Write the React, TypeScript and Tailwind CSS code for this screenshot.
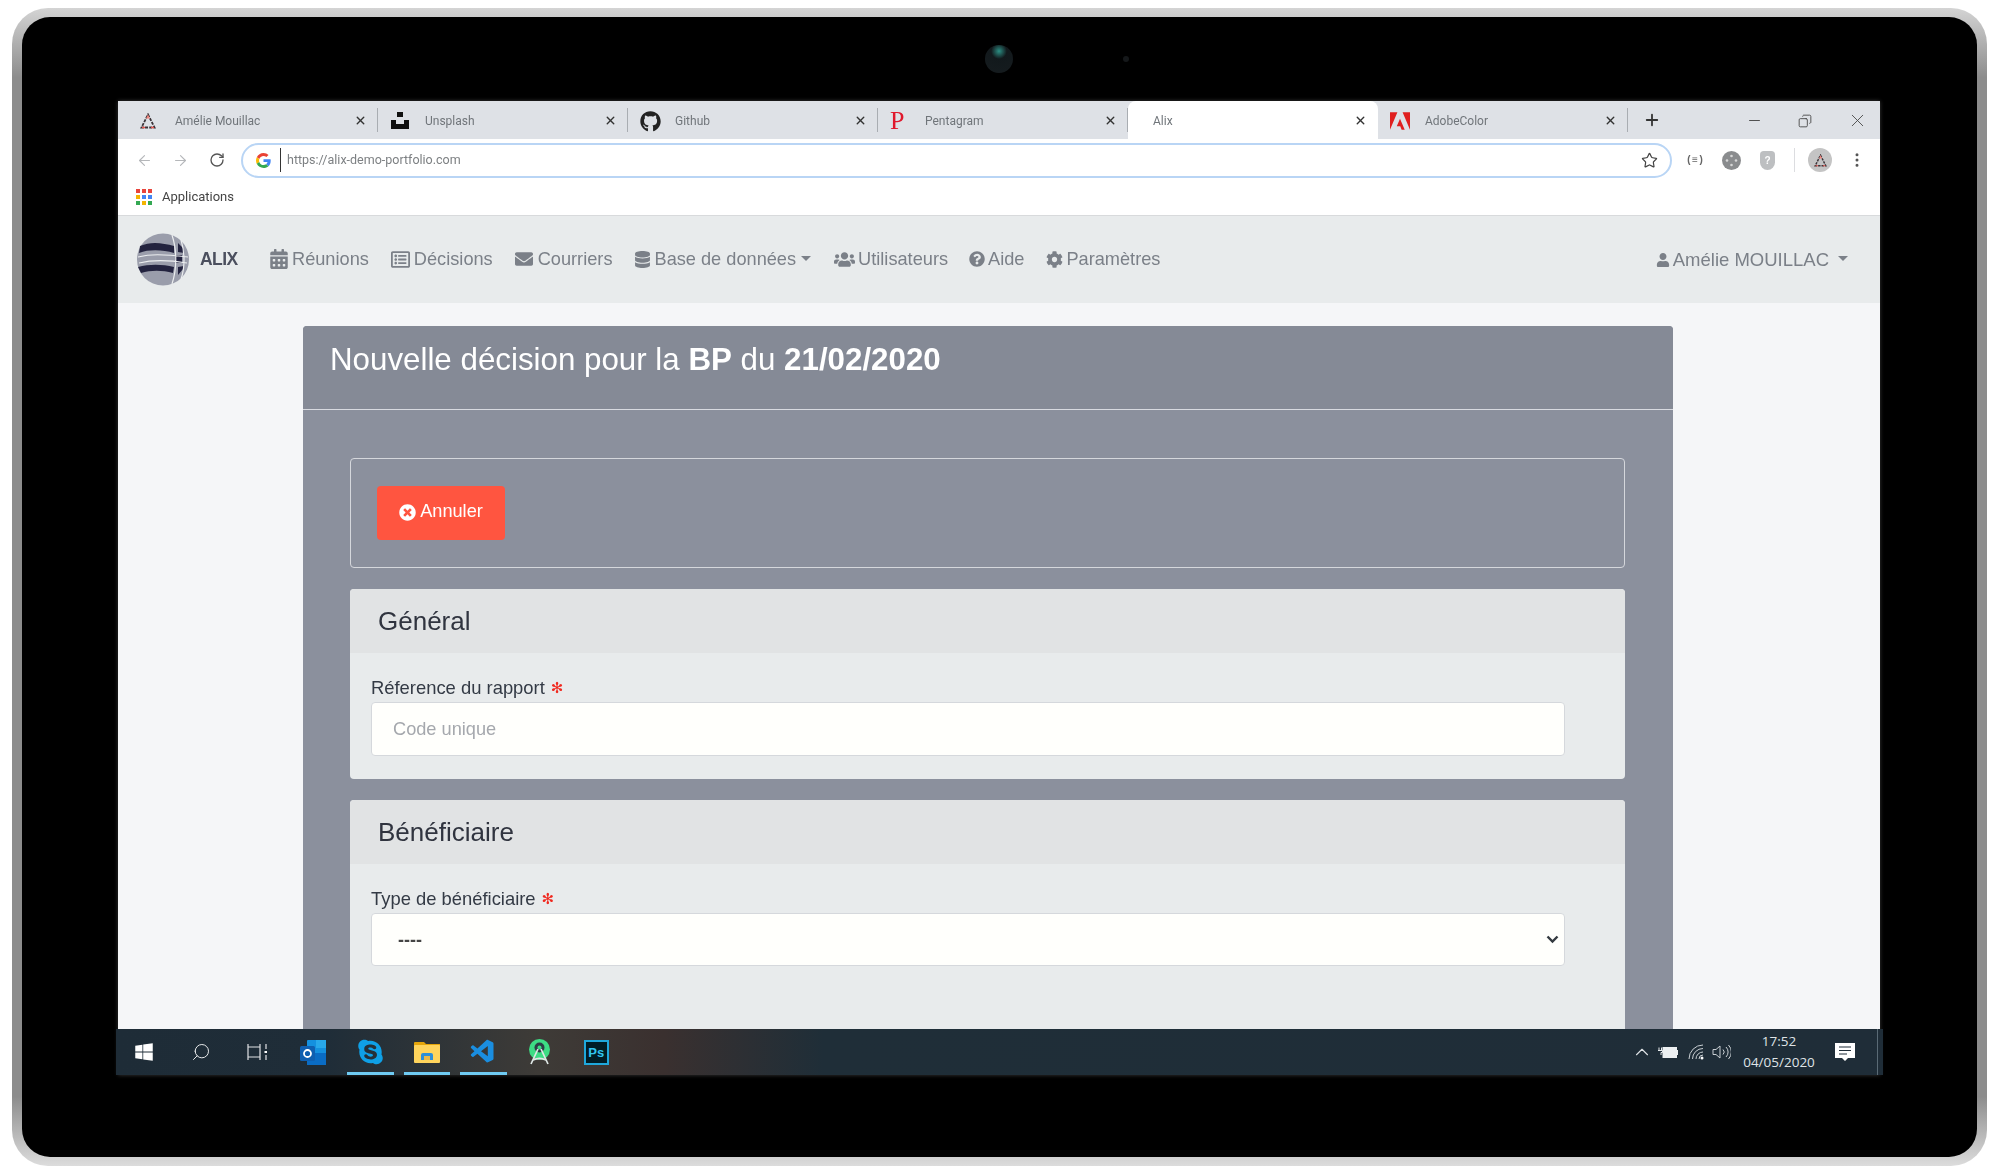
import React from "react";
import { ArrowLeft, ArrowRight, ChevronUp, Minus, Plus, RotateCw, Star, X, Copy, Search, EllipsisVertical } from "lucide-react";
import {
  FaCalendarAlt,
  FaRegListAlt,
  FaEnvelope,
  FaDatabase,
  FaUsers,
  FaQuestionCircle,
  FaCog,
  FaUser,
  FaTimesCircle,
  FaGithub,
  FaSkype,
  FaWindows,
} from "react-icons/fa";
import { SiAdobe } from "react-icons/si";
import { VscVscode } from "react-icons/vsc";

function TriangleLogo({ size = 16 }: { size?: number }) {
  return (
    <svg width={size} height={size} viewBox="0 0 16 16">
      <path d="M8 1.5 14.5 14.5H1.5Z" fill="none" stroke="#3a3338" strokeWidth="1.8" strokeDasharray="3 1.2" />
      <path d="M8 1.5 10 5.5H6Z" fill="#f0857d" />
      <path d="M2 14.5h3M11 14.5h3" stroke="#e8554e" strokeWidth="1.4" />
    </svg>
  );
}

function UnsplashLogo() {
  return (
    <svg width="20" height="20" viewBox="0 0 20 20" fill="#111">
      <rect x="7" y="1" width="6" height="5" />
      <path d="M1 9h5v4h8V9h5v9H1Z" />
    </svg>
  );
}

function GoogleG() {
  return (
    <svg width="15" height="15" viewBox="0 0 48 48">
      <path fill="#EA4335" d="M24 9.5c3.5 0 6.700 1.200 9.200 3.600l6.900-6.900C35.900 2.400 30.500 0 24 0 14.600 0 6.500 5.400 2.600 13.200l8 6.200C12.400 13.700 17.700 9.500 24 9.500z" />
      <path fill="#4285F4" d="M47 24.500c0-1.600-.1-3.100-.4-4.500H24v9h12.900c-.6 3-2.200 5.500-4.700 7.200l7.700 6C44.400 38 47 31.800 47 24.500z" />
      <path fill="#FBBC05" d="M10.500 28.600c-.5-1.400-.8-3-.8-4.600s.3-3.200.8-4.600l-8-6.200C.9 16.500 0 20.100 0 24s.9 7.500 2.600 10.800l7.900-6.200z" />
      <path fill="#34A853" d="M24 48c6.500 0 11.900-2.100 15.900-5.800l-7.700-6c-2.200 1.400-4.900 2.300-8.200 2.300-6.300 0-11.600-4.200-13.500-10l-8 6.200C6.500 42.600 14.600 48 24 48z" />
    </svg>
  );
}

function AlixLogo() {
  return (
    <svg width="52" height="53" viewBox="0 0 52 53">
      <circle cx="26" cy="26.500" r="26" fill="#9a9dab" />
      <path d="M3 13C14 8 26 10 37 13l0 7C26 17 13 16 2 20Z" fill="#23233f" />
      <path d="M1 34c11-3 24-3 36 0l-1 6c-11-3-22-3-32 0Z" fill="#23233f" />
      <path d="M38 22h7v8h-7Z" fill="#23233f" />
      <path d="M41 10l5 5 1 5-6-1ZM41 42l5-6 1-3-6 1Z" fill="#23233f" />
      <path d="M1 24c12-3 24-3 50 0M2 30c12-3 30-3 48 0M35 2c5 15 5 34 0 49M44 7c4 12 4 28 0 39" fill="none" stroke="#eceef0" strokeWidth="1.200" />
    </svg>
  );
}

function AppsGrid() {
  const colors = ["#e8453c", "#e8453c", "#e8453c", "#f4b400", "#4285f4", "#4285f4", "#34a853", "#f4b400", "#34a853"];
  return (
    <div className="grid h-4 w-4 grid-cols-3 gap-[2px]">
      {colors.map((c, i) => (
        <span key={i} className="block h-[4px] w-[4px]" style={{ backgroundColor: c }} />
      ))}
    </div>
  );
}

const tabs = [
  { label: "Amélie Mouillac", icon: <TriangleLogo /> },
  { label: "Unsplash", icon: <UnsplashLogo /> },
  { label: "Github", icon: <FaGithub size={21} color="#222" /> },
  { label: "Pentagram", icon: <span className="font-['Liberation_Serif',serif] text-[26px] leading-none text-[#e0182d]">P</span> },
  { label: "Alix", icon: null, active: true },
  { label: "AdobeColor", icon: <SiAdobe size={20} color="#e01f1f" /> },
];

function Tab({ label, icon, active }: { label: string; icon: React.ReactNode; active?: boolean }) {
  return (
    <div className={`flex h-full w-[250px] items-center pl-3 pt-[2px] ${active ? "rounded-t-lg bg-white" : ""}`}>
      <div className={`flex shrink-0 items-center ${active ? "w-[13px]" : "w-[35px]"}`}>{icon}</div>
      <span className={`font-['Roboto',sans-serif] text-xs text-[#70757a] ${active ? "w-[201px]" : "w-[179px]"}`}>{label}</span>
      <X size={13} strokeWidth={2.6} className="-mt-[2px] text-[#333]" />
      {!active && <span className="ml-auto -mt-[2px] h-6 w-px bg-[#a9adb2]" />}
    </div>
  );
}

function TabStrip() {
  return (
    <div className="flex h-[38px] shrink-0 items-end bg-[#dee1e6] pl-[10px]">
      {tabs.map((t) => (
        <Tab key={t.label} label={t.label} icon={t.icon} active={t.active} />
      ))}
      <Plus size={18} strokeWidth={2.4} className="mb-[10px] ml-[15px] text-[#333]" />
      <div className="ml-auto mb-2 flex items-center gap-[35px] pr-[12px] text-[#444]">
        <Minus size={17} strokeWidth={1.3} />
        <Copy size={14} strokeWidth={1.5} className="-scale-x-100" />
        <X size={21} strokeWidth={1} />
      </div>
    </div>
  );
}

function Toolbar() {
  return (
    <div className="flex h-[39px] shrink-0 items-center bg-white pl-[18px] pt-[3px]">
      <ArrowLeft size={17} strokeWidth={1.6} className="text-[#b5b7ba]" />
      <ArrowRight size={17} strokeWidth={1.6} className="ml-[19px] text-[#b5b7ba]" />
      <RotateCw size={16} strokeWidth={2} className="ml-[20px] text-[#555]" />
      <div className="ml-[16px] flex h-[35px] w-[1431px] items-center rounded-full border-2 border-[#b9d5f5] pl-[13px] pr-[12px]">
        <GoogleG />
        <span className="ml-[9px] h-6 w-px bg-[#333]" />
        <span className="ml-[6px] font-['Roboto',sans-serif] text-[12.5px] text-[#7d8083]">https://alix-demo-portfolio.com</span>
        <Star size={17} strokeWidth={1.7} className="ml-auto text-[#444]" />
      </div>
      <span className="ml-[14px] font-['Liberation_Mono',monospace] text-[10px] font-bold text-[#666]">(≡)</span>
      <svg width="19" height="19" viewBox="0 0 19 19" className="ml-[18px]">
        <circle cx="9.500" cy="9.500" r="9.500" fill="#8a8c8e" />
        <circle cx="9.500" cy="5" r="1.300" fill="#d8d8d8" />
        <circle cx="5" cy="9.500" r="1.300" fill="#d8d8d8" />
        <circle cx="14" cy="9.500" r="1.300" fill="#d8d8d8" />
        <circle cx="9.500" cy="14" r="1.300" fill="#d8d8d8" />
      </svg>
      <span className="ml-[19px] flex h-[19px] w-[15px] items-center justify-center rounded-b-lg rounded-t-sm bg-[#bdbfc1] font-['Liberation_Sans',sans-serif] text-[10px] font-bold text-white">?</span>
      <span className="ml-[19px] h-6 w-px bg-[#dcdde0]" />
      <span className="ml-[13px] flex h-[24px] w-[24px] items-center justify-center rounded-full bg-[#c4c4c4]">
        <TriangleLogo size={13} />
      </span>
      <EllipsisVertical size={18} className="ml-[16px] text-[#555]" />
    </div>
  );
}

function BookmarkBar() {
  return (
    <div className="flex h-[38px] shrink-0 items-center border-b border-[#d8dadc] bg-white pl-[18px]">
      <AppsGrid />
      <span className="ml-[10px] font-['Roboto',sans-serif] text-[13px] text-[#444]">Applications</span>
    </div>
  );
}

function NavItem({ icon, width, label, caret, className }: { icon: React.ReactNode; width: string; label: string; caret?: boolean; className?: string }) {
  return (
    <div className={`flex items-center ${className ?? ""}`}>
      <span className={`flex items-center ${width}`}>{icon}</span>
      <span>{label}</span>
      {caret && <span className="ml-[5px] mt-[-2px] h-0 w-0 border-x-[5px] border-t-[5px] border-x-transparent border-t-[#7c8189]" />}
    </div>
  );
}

function Navbar() {
  return (
    <nav className="flex h-[87px] shrink-0 items-center bg-[#e8ebec] pl-[19px] pr-[32px] font-['Liberation_Sans',sans-serif] text-[18.2px] text-[#7b8088]">
      <AlixLogo />
      <span className="ml-[11px] w-[39px] text-[17.5px] font-bold tracking-[-0.6px] text-[#4b4f5e]">ALIX</span>
      <NavItem className="ml-[30px]" width="w-[23px]" icon={<FaCalendarAlt size={20} />} label="Réunions" />
      <NavItem className="ml-[22px]" width="w-[23px]" icon={<FaRegListAlt size={19} />} label="Décisions" />
      <NavItem className="ml-[22px]" width="w-[23px]" icon={<FaEnvelope size={18} />} label="Courriers" />
      <NavItem className="ml-[21px]" width="w-[21px]" icon={<FaDatabase size={17} />} label="Base de données" caret />
      <NavItem className="ml-[23px]" width="w-[24px]" icon={<FaUsers size={21} />} label="Utilisateurs" />
      <NavItem className="ml-[21px]" width="w-[19px]" icon={<FaQuestionCircle size={16} />} label="Aide" />
      <NavItem className="ml-[22px]" width="w-[20px]" icon={<FaCog size={17} />} label="Paramètres" />
      <div className="ml-auto flex items-center text-[18.5px]">
        <span className="flex w-[17px] items-center"><FaUser size={14} /></span>
        <span>Amélie MOUILLAC</span>
        <span className="ml-[9px] mt-[-2px] h-0 w-0 border-x-[5px] border-t-[5px] border-x-transparent border-t-[#7c8189]" />
      </div>
    </nav>
  );
}

function Label({ text }: { text: string }) {
  return (
    <div className="-mt-px flex h-[28px] items-center text-[18.4px] text-[#333a45]">
      {text}
      <span className="ml-[6px] font-['DejaVu_Sans',sans-serif] text-[15px] font-bold leading-none text-[#f0281e]">✻</span>
    </div>
  );
}

function Section({ title, pad, children }: { title: string; pad: string; children: React.ReactNode }) {
  return (
    <section className="rounded bg-[#e8ebec]">
      <h2 className="flex h-[64px] items-center rounded-t bg-[#e1e3e4] pl-[28px] text-[26px] text-[#30343f]">{title}</h2>
      <div className={`pl-[21px] pr-[60px] pt-[22px] ${pad}`}>{children}</div>
    </section>
  );
}

function DecisionForm() {
  return (
    <div className="h-[703px] overflow-hidden rounded-t bg-[#8b909d] font-['Liberation_Sans',sans-serif]">
      <div className="flex h-[84px] border-b border-[#d8dae0] bg-[#858a96] pl-[27px] pt-[14px] text-[31.3px] leading-[40px] text-white">
        <h1>
          Nouvelle décision pour la <b>BP</b> du <b>21/02/2020</b>
        </h1>
      </div>
      <div className="flex flex-col gap-[21px] pl-[47px] pr-[48px] pt-[48px]">
        <div className="flex h-[110px] items-center rounded border border-[#d5d7dc] pl-[26px]">
          <button className="flex h-[54px] w-[128px] items-center justify-center gap-[4px] rounded bg-[#ff5540] pb-[2px] text-[18.2px] text-white">
            <FaTimesCircle size={17} />
            Annuler
          </button>
        </div>
        <Section title="Général" pad="pb-[23px]">
          <Label text="Réference du rapport" />
          <input
            readOnly
            placeholder="Code unique"
            className="block h-[54px] w-full rounded border border-[#d5d8dc] bg-[#fffffc] pl-[21px] text-[18.2px] placeholder:text-[#a5a8ad]"
          />
        </Section>
        <Section title="Bénéficiaire" pad="pb-[80px]">
          <Label text="Type de bénéficiaire" />
          <div className="flex h-[53px] w-full items-center justify-between rounded border border-[#d5d8dc] bg-[#fffffc] pl-[26px] pr-[5px] text-[18px] font-bold leading-none text-[#444]">
            <span>----</span>
            <svg width="13" height="9" viewBox="0 0 13 9"><path d="M1.500 1.500 6.500 6.500 11.500 1.500" fill="none" stroke="#343a40" strokeWidth="2.400" /></svg>
          </div>
        </Section>
      </div>
    </div>
  );
}

function OutlookIcon() {
  return (
    <svg width="27" height="27" viewBox="0 0 27 27">
      <rect x="7" y="1" width="19" height="25" rx="1" fill="#1490df" />
      <rect x="16" y="1" width="10" height="8" fill="#28a8ea" />
      <rect x="7" y="14" width="19" height="12" fill="#0a6cc4" />
      <rect x="0" y="7" width="15" height="15" rx="1.500" fill="#0f5fb0" />
      <circle cx="7.500" cy="14.500" r="3.500" fill="none" stroke="#fff" strokeWidth="1.800" />
    </svg>
  );
}

function FolderIcon() {
  return (
    <svg width="26" height="22" viewBox="0 0 26 22">
      <path d="M0 2a1 1 0 0 1 1-1h9l2 2h14v4H0Z" fill="#e5a50a" />
      <rect y="4" width="26" height="18" rx="1" fill="#ffd45c" />
      <path d="M7 19v-5a2 2 0 0 1 2-2h8a2 2 0 0 1 2 2v5Z" fill="#2c8fd8" />
      <rect x="10" y="15" width="6" height="4" fill="#e9b949" />
    </svg>
  );
}

function AndroidStudioIcon() {
  return (
    <svg width="23" height="26" viewBox="0 0 23 26">
      <circle cx="11.500" cy="10.500" r="10.500" fill="#3ddc84" />
      <circle cx="11.500" cy="8.500" r="5" fill="#2c3e46" />
      <circle cx="11.500" cy="8.500" r="2" fill="#3ddc84" />
      <path d="M10 10 3 25M13 10l7 15M5 21c4-2 9-2 13 0" fill="none" stroke="#dfe7e5" strokeWidth="1.700" />
    </svg>
  );
}

function PhotoshopIcon() {
  return (
    <div className="flex h-[25px] w-[25px] items-center justify-center border-2 border-[#1fa8dc] bg-[#001d26] font-['Liberation_Sans',sans-serif] text-[13px] font-semibold leading-none text-[#31c5f0]">
      Ps
    </div>
  );
}

const taskItems: { icon: React.ReactNode; running?: boolean }[] = [
  { icon: <FaWindows size={20} color="#fff" /> },
  { icon: <Search size={20} strokeWidth={1.2} color="#e7e9ea" className="-scale-x-100" /> },
  {
    icon: (
      <svg width="20" height="18" viewBox="0 0 20 18" fill="none" stroke="#dfe2e4" strokeWidth="1.200">
        <path d="M1 1v16M13 1v16M1 4h12M1 14h12M19 1v5M19 12v5" />
        <rect x="17.500" y="8" width="3" height="2" fill="#fff" stroke="none" />
      </svg>
    ),
  },
  { icon: <OutlookIcon /> },
  {
    icon: (
      <span className="flex h-[27px] w-[27px] items-center justify-center">
        <FaSkype size={28} color="#0fa0e6" />
      </span>
    ),
    running: true,
  },
  { icon: <FolderIcon />, running: true },
  { icon: <VscVscode size={28} color="#1a8ee0" />, running: true },
  { icon: <AndroidStudioIcon /> },
  { icon: <PhotoshopIcon /> },
];

function TrayIcons() {
  return (
    <>
      <ChevronUp size={22} strokeWidth={1.2} />
      <svg width="20" height="14" viewBox="0 0 20 14" className="ml-[5px]">
        <path d="M1 2.500v3M3.500 2.500v3M0 5.500h4.500v2H3v2.500" fill="none" stroke="#e8ebed" strokeWidth="1" />
        <rect x="5" y="2.500" width="13.500" height="10" fill="#eceff1" stroke="#eceff1" />
        <rect x="18.800" y="5" width="1.200" height="5" fill="#eceff1" />
      </svg>
      <svg width="16" height="16" viewBox="0 0 16 16" fill="none" stroke="#c9cfd3" strokeWidth="1" className="ml-[10px]">
        <path d="M1 15A14 14 0 0 1 15 1M4.500 15A10.500 10.500 0 0 1 15 4.500M8 15A7 7 0 0 1 15 8M11 15a4 4 0 0 1 4-4" />
        <circle cx="14" cy="14" r="1.500" fill="#fff" stroke="none" />
      </svg>
      <svg width="19" height="16" viewBox="0 0 19 16" fill="none" stroke="#c9cfd3" strokeWidth="1" className="ml-[8px]">
        <path d="M1 5.500h3L8 2v12L4 10.500H1Z" />
        <path d="M11 5.500a3.500 3.500 0 0 1 0 5M14 3a7 7 0 0 1 0 10M16.500 1a10 10 0 0 1 0 14" />
      </svg>
    </>
  );
}

function Taskbar() {
  return (
    <div className="-ml-[2px] -mr-[3px] flex h-[46px] shrink-0 items-stretch bg-[linear-gradient(90deg,#1e2c37_0%,#1f2d38_12%,#3e3b37_24%,#3a302f_31%,#1f2e38_40%,#1f2d38_100%)]">
      {taskItems.map((item, i) => (
        <div key={i} className="relative flex w-[56.500px] items-center justify-center">
          {item.icon}
          {item.running && <span className="absolute bottom-0 left-[5px] right-[5px] h-[3px] bg-[#6fcbf3]" />}
        </div>
      ))}
      <div className="ml-auto flex items-center pr-[5px] text-[#dfe3e6]">
        <TrayIcons />
        <div className="ml-[12px] flex w-[72px] flex-col items-center font-['Open_Sans',sans-serif] text-[13.5px] leading-[21px]">
          <span>17:52</span>
          <span>04/05/2020</span>
        </div>
        <svg width="20" height="19" viewBox="0 0 20 19" className="ml-[20px]">
          <path d="M0 0h20v15h-7l-3 3-3-3H0Z" fill="#fff" />
          <path d="M4 4h12M4 7.500h12M4 11h8" stroke="#1f2d38" strokeWidth="1.200" />
        </svg>
        <span className="ml-[22px] h-full w-px bg-[#5a6a75]" />
      </div>
    </div>
  );
}

export default function App() {
  return (
    <div className="h-[1176px] w-[2000px] overflow-hidden bg-white pl-3 pr-3 pt-2">
      <div className="h-[1158px] w-[1975px] rounded-[36px] bg-[linear-gradient(180deg,#d4d4d4,#8c8c8c_6%,#8c8c8c_94%,#dcdcdc)] pb-[9px] pl-[10px] pr-[10px] pt-[9px]">
        <div className="h-[1140px] rounded-[28px] bg-black pl-[96px]">
          <div className="flex h-[84px] items-center pl-[867px]">
            <span className="block h-7 w-7 rounded-full bg-[radial-gradient(circle_at_50%_22%,#2c8f84,#12191c_30%,#161c1f)]" />
            <span className="ml-[110px] block h-[6px] w-[6px] rounded-full bg-[#15181a]" />
          </div>
          <div className="flex h-[974px] w-[1762px] flex-col shadow-[0_0_4px_#3a3a3a]">
            <div className="flex flex-col blur-[0.4px]">
              <TabStrip />
              <Toolbar />
              <BookmarkBar />
              <Navbar />
              <main className="h-[726px] shrink-0 overflow-hidden bg-[#f5f6f8] pl-[185px] pr-[207px] pt-[23px]">
                <DecisionForm />
              </main>
            </div>
            <Taskbar />
          </div>
        </div>
      </div>
    </div>
  );
}
